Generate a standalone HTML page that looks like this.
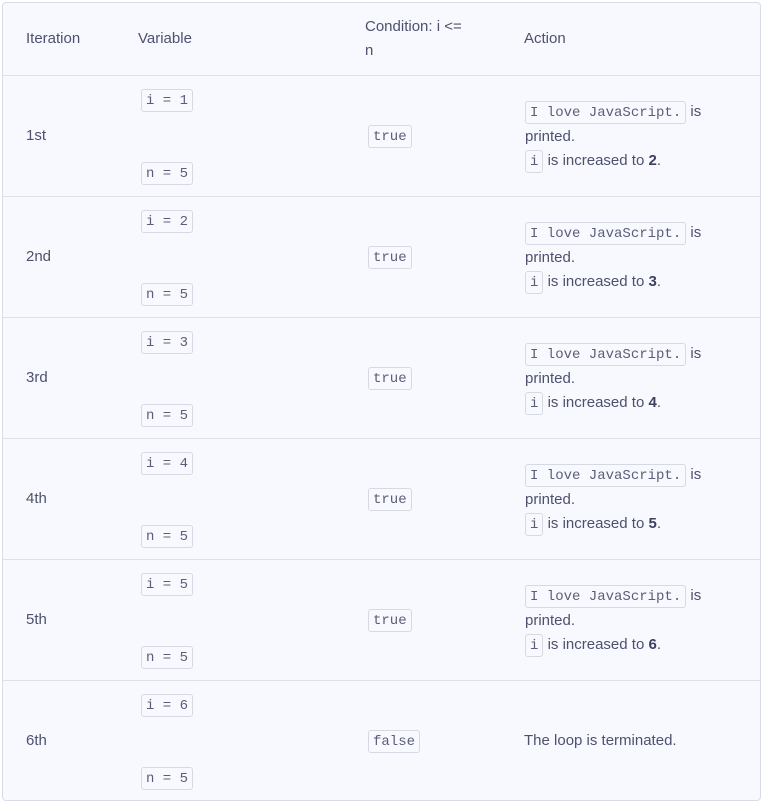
<!DOCTYPE html>
<html><head><meta charset="utf-8"><style>
body{margin:0;background:#fff;width:763px;height:803px;overflow:hidden;font-family:"Liberation Sans",sans-serif;color:#4d516e;font-size:15px}
.t{position:absolute;left:2px;top:2px;width:757px;height:797px;border:1px solid #d9dce6;border-radius:4px;background:#f8f9fe}
.row{position:absolute;left:0;width:757px;height:120px;border-bottom:1px solid #dde0e8}
.c{position:absolute;white-space:nowrap;line-height:24px}
.a{left:23px;top:48px}.v1{left:138px;top:12px}.v2{left:138px;top:85px}.k{left:365px;top:48px}.x{left:522px;top:24px}
code{font-family:"Liberation Mono",monospace;font-size:14px;color:#5a5e78;border:1px solid #d6d9e3;border-radius:3px;padding:3px 4px 2px;background:#f8f9fe}
b{color:#3d4160}
</style></head><body><div class="t">
<div class="row" style="top:0;height:72px">
<div class="c" style="left:23px;top:24px">Iteration</div>
<div class="c" style="left:135px;top:24px">Variable</div>
<div class="c" style="left:362px;top:12px">Condition: i &lt;=<br>n</div>
<div class="c" style="left:521px;top:24px">Action</div>
</div>
<div class="row" style="top:73px"><div class="c a">1st</div><div class="c v1"><code>i = 1</code></div><div class="c v2"><code>n = 5</code></div><div class="c k"><code>true</code></div><div class="c x"><code>I love JavaScript.</code> is<br>printed.<br><code>i</code> is increased to <b>2</b>.</div></div>
<div class="row" style="top:194px"><div class="c a">2nd</div><div class="c v1"><code>i = 2</code></div><div class="c v2"><code>n = 5</code></div><div class="c k"><code>true</code></div><div class="c x"><code>I love JavaScript.</code> is<br>printed.<br><code>i</code> is increased to <b>3</b>.</div></div>
<div class="row" style="top:315px"><div class="c a">3rd</div><div class="c v1"><code>i = 3</code></div><div class="c v2"><code>n = 5</code></div><div class="c k"><code>true</code></div><div class="c x"><code>I love JavaScript.</code> is<br>printed.<br><code>i</code> is increased to <b>4</b>.</div></div>
<div class="row" style="top:436px"><div class="c a">4th</div><div class="c v1"><code>i = 4</code></div><div class="c v2"><code>n = 5</code></div><div class="c k"><code>true</code></div><div class="c x"><code>I love JavaScript.</code> is<br>printed.<br><code>i</code> is increased to <b>5</b>.</div></div>
<div class="row" style="top:557px"><div class="c a">5th</div><div class="c v1"><code>i = 5</code></div><div class="c v2"><code>n = 5</code></div><div class="c k"><code>true</code></div><div class="c x"><code>I love JavaScript.</code> is<br>printed.<br><code>i</code> is increased to <b>6</b>.</div></div>
<div class="row" style="top:678px;border-bottom:none"><div class="c a">6th</div><div class="c v1"><code>i = 6</code></div><div class="c v2"><code>n = 5</code></div><div class="c k"><code>false</code></div><div class="c" style="left:521px;top:48px">The loop is terminated.</div></div>
</div>
</body></html>
